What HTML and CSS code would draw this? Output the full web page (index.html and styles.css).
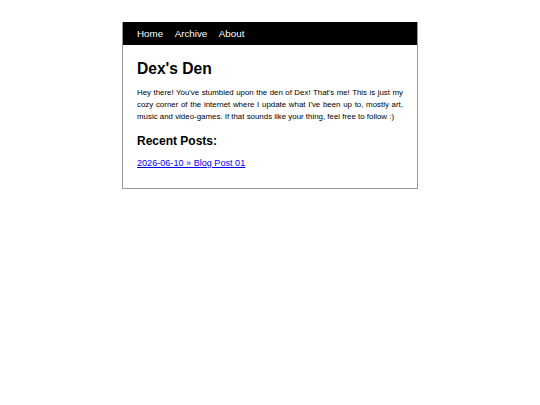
FILE: index.html
```html
<!DOCTYPE html>
<html>
<head>
<meta charset="utf-8">
<link rel="stylesheet" href="styles.css">
</head>
<body>
<div class="page">
  <nav class="nav">
    <a href="#">Home</a>
    <a href="#">Archive</a>
    <a href="#">About</a>
  </nav>
  <main class="content">
    <h1 class="title">Dex's Den</h1>
    <p class="intro">Hey there! You've stumbled upon the den of Dex! That's me! This is just my cozy corner of the internet where I update what I've been up to, mostly art, music and video-games. If that sounds like your thing, feel free to follow :)</p>
    <h2 class="subtitle">Recent Posts:</h2>
    <div class="posts"><a class="post" href="#">2026-06-10 » Blog Post 01</a></div>
  </main>
</div>
</body>
</html>
```
FILE: styles.css
```css
html, body { margin: 0; padding: 0; background: #fff; }
body { font-family: "Liberation Sans", Arial, sans-serif; color: #000; }
.page {
  width: 294px;
  margin: 22px auto 0;
  border: 1px solid #999;
  border-top: none;
}
.nav {
  background: #000;
  height: 23px;
  display: flex;
  align-items: center;
  gap: 11.5px;
  padding: 0 14px;
}
.nav a { color: #fff; text-decoration: none; font-size: 9.8px; }
.content { padding: 14px 14px 19px; }
.title { font-size: 15.6px; font-weight: bold; margin: 0 0 8px; line-height: 20px; }
.intro {
  font-size: 7.9px;
  line-height: 12px;
  margin: 0 0 10px;
  text-align: justify;
}
.subtitle { font-size: 12px; font-weight: bold; margin: 0 0 8px; line-height: 16px; }
.posts { font-size: 9.1px; line-height: 12px; }
.post { color: #0000ee; text-decoration: underline; }
```
